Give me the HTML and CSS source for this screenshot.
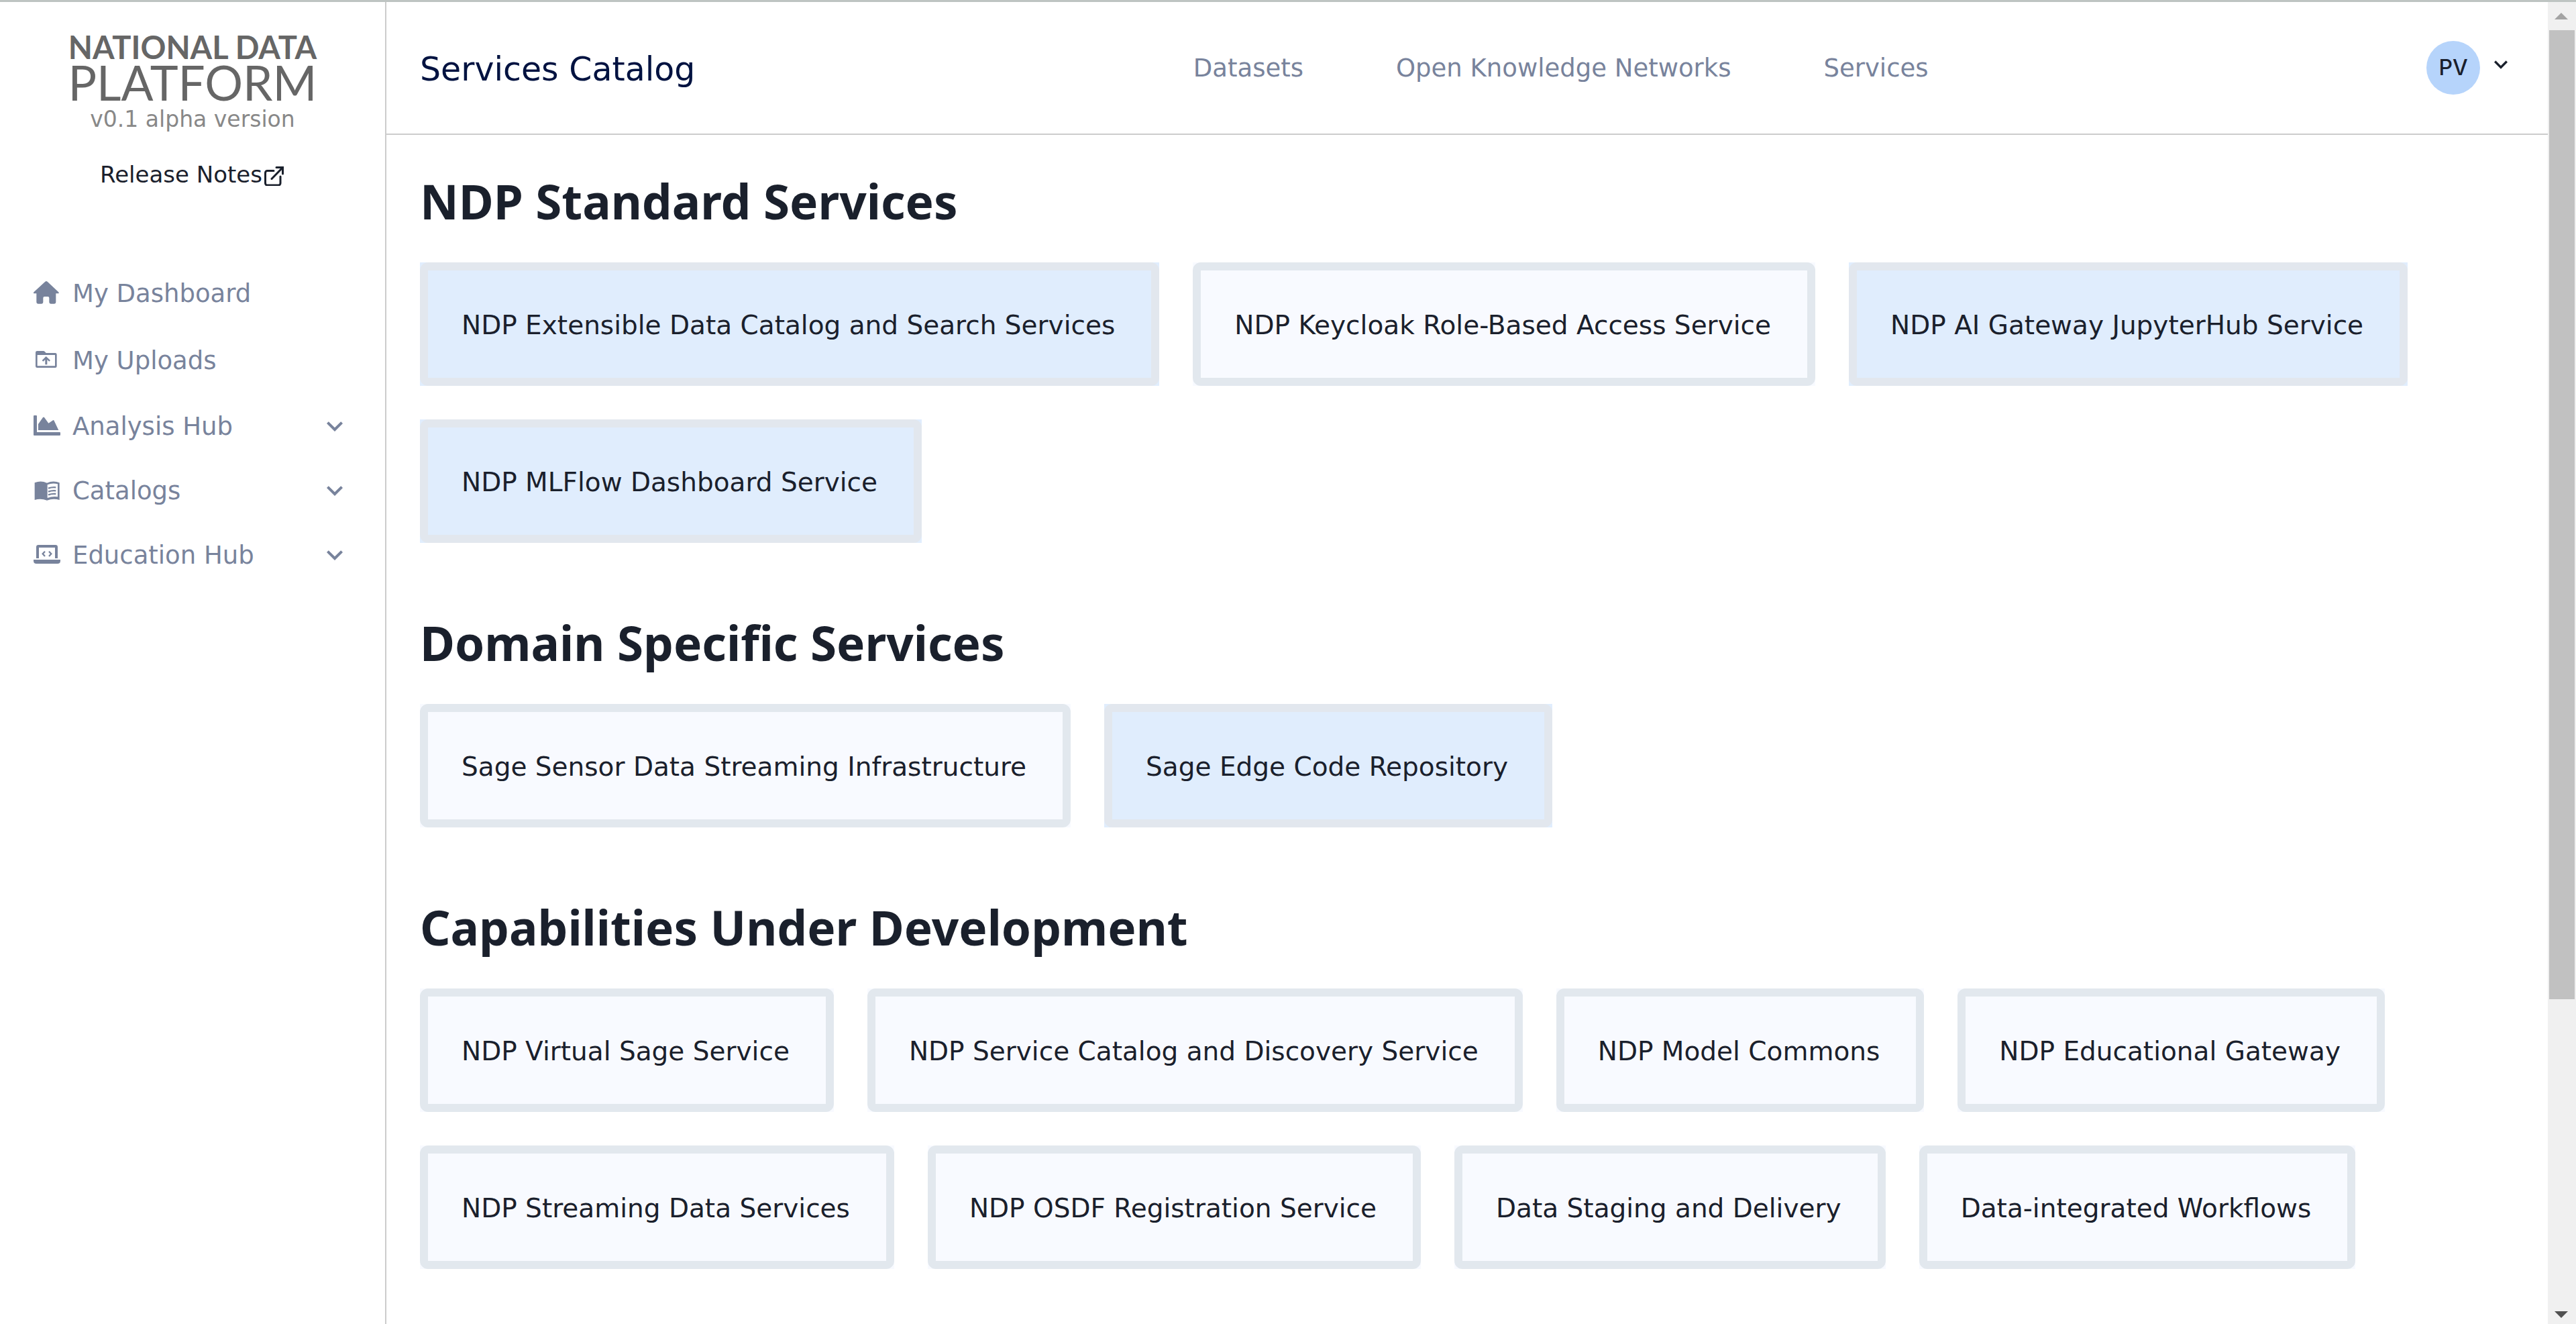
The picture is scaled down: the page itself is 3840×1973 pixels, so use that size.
FILE: index.html
```html
<!DOCTYPE html>
<html lang="en">
<head>
<meta charset="utf-8">
<meta name="viewport" content="width=device-width, initial-scale=1">
<title>Services Catalog - National Data Platform</title>
<link rel="stylesheet" href="styles.css">
</head>
<body>
<div class="app">
  <aside class="sidebar">
    <div class="brand">
      <div class="brand-top">NATIONAL DATA</div>
      <div class="brand-bottom">PLATFORM</div>
      <div class="version">v0.1 alpha version</div>
      <a class="release" href="#">Release Notes<svg class="release-icon" viewBox="0 0 34 34" aria-hidden="true"><path d="M17 11.500H7.500a3 3 0 0 0-3 3V30a3 3 0 0 0 3 3H24a3 3 0 0 0 3-3V20M14 23.500L30 7M21 6.500h9.500V16"/></svg></a>
    </div>
    <nav class="menu" aria-label="Workspace">
      <a class="menu-item tall" href="#">
        <svg class="menu-icon" viewBox="30 21 120 120" aria-hidden="true"><path d="M82 29q5-4 10 0l49 46q4 4 1 7h-12v39q0 7-7 7h-16q-7 0-7-7v-19q0-6-6-6H79q-6 0-6 6v19q0 7-7 7H50q-7 0-7-7V82H31q-3-3 1-7z"/></svg>
        <span>My Dashboard</span>
      </a>
      <a class="menu-item tall" href="#">
        <svg class="menu-icon" viewBox="30 321 120 120" aria-hidden="true"><path fill-rule="evenodd" d="M46 339h28q4 0 7 4l5 5h41q7 0 7 7v52q0 7-7 7H46q-7 0-7-7v-61q0-7 7-7zm1 18v49h79v-49z"/><path d="M86 363l19 18-5 5-9-8v22h-9v-22l-9 8-5-5z"/></svg>
        <span>My Uploads</span>
      </a>
      <button class="menu-item" type="button">
        <svg class="menu-icon" viewBox="30 615 120 120" aria-hidden="true"><path d="M33 627h9q3 0 3 3v72h102q3 0 3 3v9q0 3-3 3H33q-3 0-3-3v-84q0-3 3-3z"/><path d="M51 693v-27l21-30q3-3 6 0l19 26 20-13q3-2 5 2l20 42z"/></svg>
        <span>Analysis Hub</span>
        <svg class="chevron" viewBox="0 0 24 24" aria-hidden="true"><path d="M16.590 8.590L12 13.170 7.410 8.590 6 10l6 6 6-6z"/></svg>
      </button>
      <button class="menu-item" type="button">
        <svg class="menu-icon" viewBox="30 903 120 120" aria-hidden="true"><path fill-rule="evenodd" d="M35 928q28-12 55 1 28-13 56-1v77q-28-9-56 2-27-11-55-2zm57 9v59q23-9 46-5v-57q-24-6-46 3z"/><path class="icon-line" d="M96 953q17-6 34-4M96 968q17-6 34-4M96 982q17-6 34-4"/></svg>
        <span>Catalogs</span>
        <svg class="chevron" viewBox="0 0 24 24" aria-hidden="true"><path d="M16.590 8.590L12 13.170 7.410 8.590 6 10l6 6 6-6z"/></svg>
      </button>
      <button class="menu-item" type="button">
        <svg class="menu-icon" viewBox="30 1191 120 120" aria-hidden="true"><path d="M42 1266v-50q0-10 10-10h76q10 0 10 10v50h-12v-48H54v48z"/><path d="M30 1272h120v5q0 13-13 13H43q-13 0-13-13z"/><path class="icon-line" d="M81 1235l-10 11 10 11M99 1235l10 11-10 11"/></svg>
        <span>Education Hub</span>
        <svg class="chevron" viewBox="0 0 24 24" aria-hidden="true"><path d="M16.590 8.590L12 13.170 7.410 8.590 6 10l6 6 6-6z"/></svg>
      </button>
    </nav>
  </aside>

  <div class="page">
    <header class="topbar">
      <h1 class="title">Services Catalog</h1>
      <nav class="links" aria-label="Main">
        <a href="#">Datasets</a>
        <a href="#">Open Knowledge Networks</a>
        <a href="#">Services</a>
      </nav>
      <button class="account" type="button">
        <span class="avatar">PV</span>
        <svg class="account-chevron" viewBox="0 3 24 24" aria-hidden="true"><path d="M16.590 8.590L12 13.170 7.410 8.590 6 10l6 6 6-6z"/></svg>
      </button>
    </header>

    <main class="content">
      <section class="group">
        <h2>NDP Standard Services</h2>
        <div class="cards">
          <a class="card active" href="#"><span>NDP Extensible Data Catalog and Search Services</span></a>
          <a class="card" href="#"><span>NDP Keycloak Role-Based Access Service</span></a>
          <a class="card active" href="#"><span>NDP AI Gateway JupyterHub Service</span></a>
          <a class="card active" href="#"><span>NDP MLFlow Dashboard Service</span></a>
        </div>
      </section>
      <section class="group">
        <h2>Domain Specific Services</h2>
        <div class="cards">
          <a class="card" href="#"><span>Sage Sensor Data Streaming Infrastructure</span></a>
          <a class="card active" href="#"><span>Sage Edge Code Repository</span></a>
        </div>
      </section>
      <section class="group">
        <h2>Capabilities Under Development</h2>
        <div class="cards">
          <a class="card" href="#"><span>NDP Virtual Sage Service</span></a>
          <a class="card" href="#"><span>NDP Service Catalog and Discovery Service</span></a>
          <a class="card" href="#"><span>NDP Model Commons</span></a>
          <a class="card" href="#"><span>NDP Educational Gateway</span></a>
          <a class="card" href="#"><span>NDP Streaming Data Services</span></a>
          <a class="card" href="#"><span>NDP OSDF Registration Service</span></a>
          <a class="card" href="#"><span>Data Staging and Delivery</span></a>
          <a class="card" href="#"><span>Data-integrated Workflows</span></a>
        </div>
      </section>
    </main>
  </div>

  <div class="scrollbar" aria-hidden="true">
    <div class="scroll-end"><svg class="scroll-arrow" viewBox="0 0 20 10"><path d="M0 10L10 0l10 10z"/></svg></div>
    <div class="scroll-track"><div class="scroll-thumb"></div></div>
    <div class="scroll-end last"><svg class="scroll-arrow" viewBox="0 0 20 10"><path d="M0 0h20L10 10z"/></svg></div>
  </div>
</div>
</body>
</html>
```
FILE: styles.css
```css
* {
  box-sizing: border-box;
}

body {
  margin: 0;
  background: #fff;
  color: #1a202c;
  font-family: "DejaVu Sans", sans-serif;
  font-size: 37px;
}

a {
  color: inherit;
  text-decoration: none;
}

button {
  border: 0;
  padding: 0;
  background: none;
  color: inherit;
  font: inherit;
  cursor: pointer;
}

svg {
  display: block;
  flex: none;
  fill: currentColor;
}

.app {
  display: flex;
  min-height: 100vh;
  border-top: 3px solid #bec4c2;
}

/* Sidebar */
.sidebar {
  flex: none;
  width: 576px;
  padding-top: 44px;
  border-right: 2px solid #ccc;
}

.brand {
  display: flex;
  flex-direction: column;
  align-items: center;
  color: #666;
  white-space: nowrap;
}

.brand-top {
  font: 700 47px/46px Lato, sans-serif;
}

.brand-bottom {
  font: 400 71px/60px Lato, sans-serif;
}

.version {
  color: #888;
  font-size: 33px;
  line-height: 50px;
}

.release {
  display: flex;
  align-items: center;
  margin-top: 32px;
  color: #1a202c;
  font-size: 34px;
  line-height: 50px;
}

.release-icon {
  width: 34px;
  height: 34px;
  fill: none;
  stroke: currentColor;
  stroke-width: 3;
  stroke-linecap: round;
}

.menu {
  display: flex;
  flex-direction: column;
  margin-top: 102px;
  color: #78839c;
}

.menu-item {
  display: flex;
  align-items: center;
  gap: 18px;
  height: 96px;
  padding: 0 51px 0 50px;
}

.tall {
  height: 100px;
}

.menu-icon {
  width: 40px;
  height: 40px;
}

.icon-line {
  fill: none;
  stroke: currentColor;
  stroke-width: 7;
}

.chevron {
  width: 48px;
  height: 48px;
  margin-left: auto;
}

/* Main column */
.page {
  flex: 1;
  min-width: 0;
}

.topbar {
  display: flex;
  align-items: center;
  justify-content: space-between;
  height: 198px;
  padding: 0 50px;
  border-bottom: 2px solid #ccc;
}

.title {
  margin: 0;
  padding-top: 4px;
  color: #001240;
  font-size: 49px;
  font-weight: 400;
}

.links {
  display: flex;
  gap: 138px;
  color: #78839c;
}

.account {
  display: flex;
  align-items: center;
  gap: 11px;
}

.avatar {
  width: 80px;
  border-radius: 50%;
  background: #b6d4fb;
  font: 500 32px/80px Inter, sans-serif;
  text-align: center;
}

.account-chevron {
  width: 40px;
  height: 40px;
}

.content {
  padding-top: 50px;
}

.group {
  padding: 0 50px;
  margin-bottom: 100px;
}

.group:last-child {
  margin-bottom: 50px;
}

.group h2 {
  margin: 0 0 42px;
  font: 700 71px/98px "Noto Sans", sans-serif;
}

.cards {
  display: flex;
  flex-wrap: wrap;
  gap: 50px;
}

/* The frame is rounded, the fill behind it keeps square corners */
.card {
  background: #f8faff;
  font-size: 39px;
  line-height: 60px;
}

.card span {
  display: block;
  padding: 52px 54px 48px 50px;
  border: 12px solid #e2e8ee;
  border-radius: 12px;
}

.card.active {
  background: #e0edfd;
}

.card.active span {
  border-color: #e2e7ee;
}

/* Scrollbar */
.scrollbar {
  display: flex;
  flex: none;
  flex-direction: column;
  width: 42px;
  background: #f0f0f0;
}

.scroll-end {
  display: flex;
  align-items: center;
  justify-content: center;
  height: 42px;
  padding-right: 2px;
  color: #a3a3a3;
}

.scroll-end.last {
  height: 28px;
  color: #505050;
}

.scroll-arrow {
  width: 20px;
  height: 10px;
}

.scroll-track {
  flex: 1;
  padding: 0 2px;
}

.scroll-thumb {
  height: 76%;
  background: #c1c1c1;
}
```
